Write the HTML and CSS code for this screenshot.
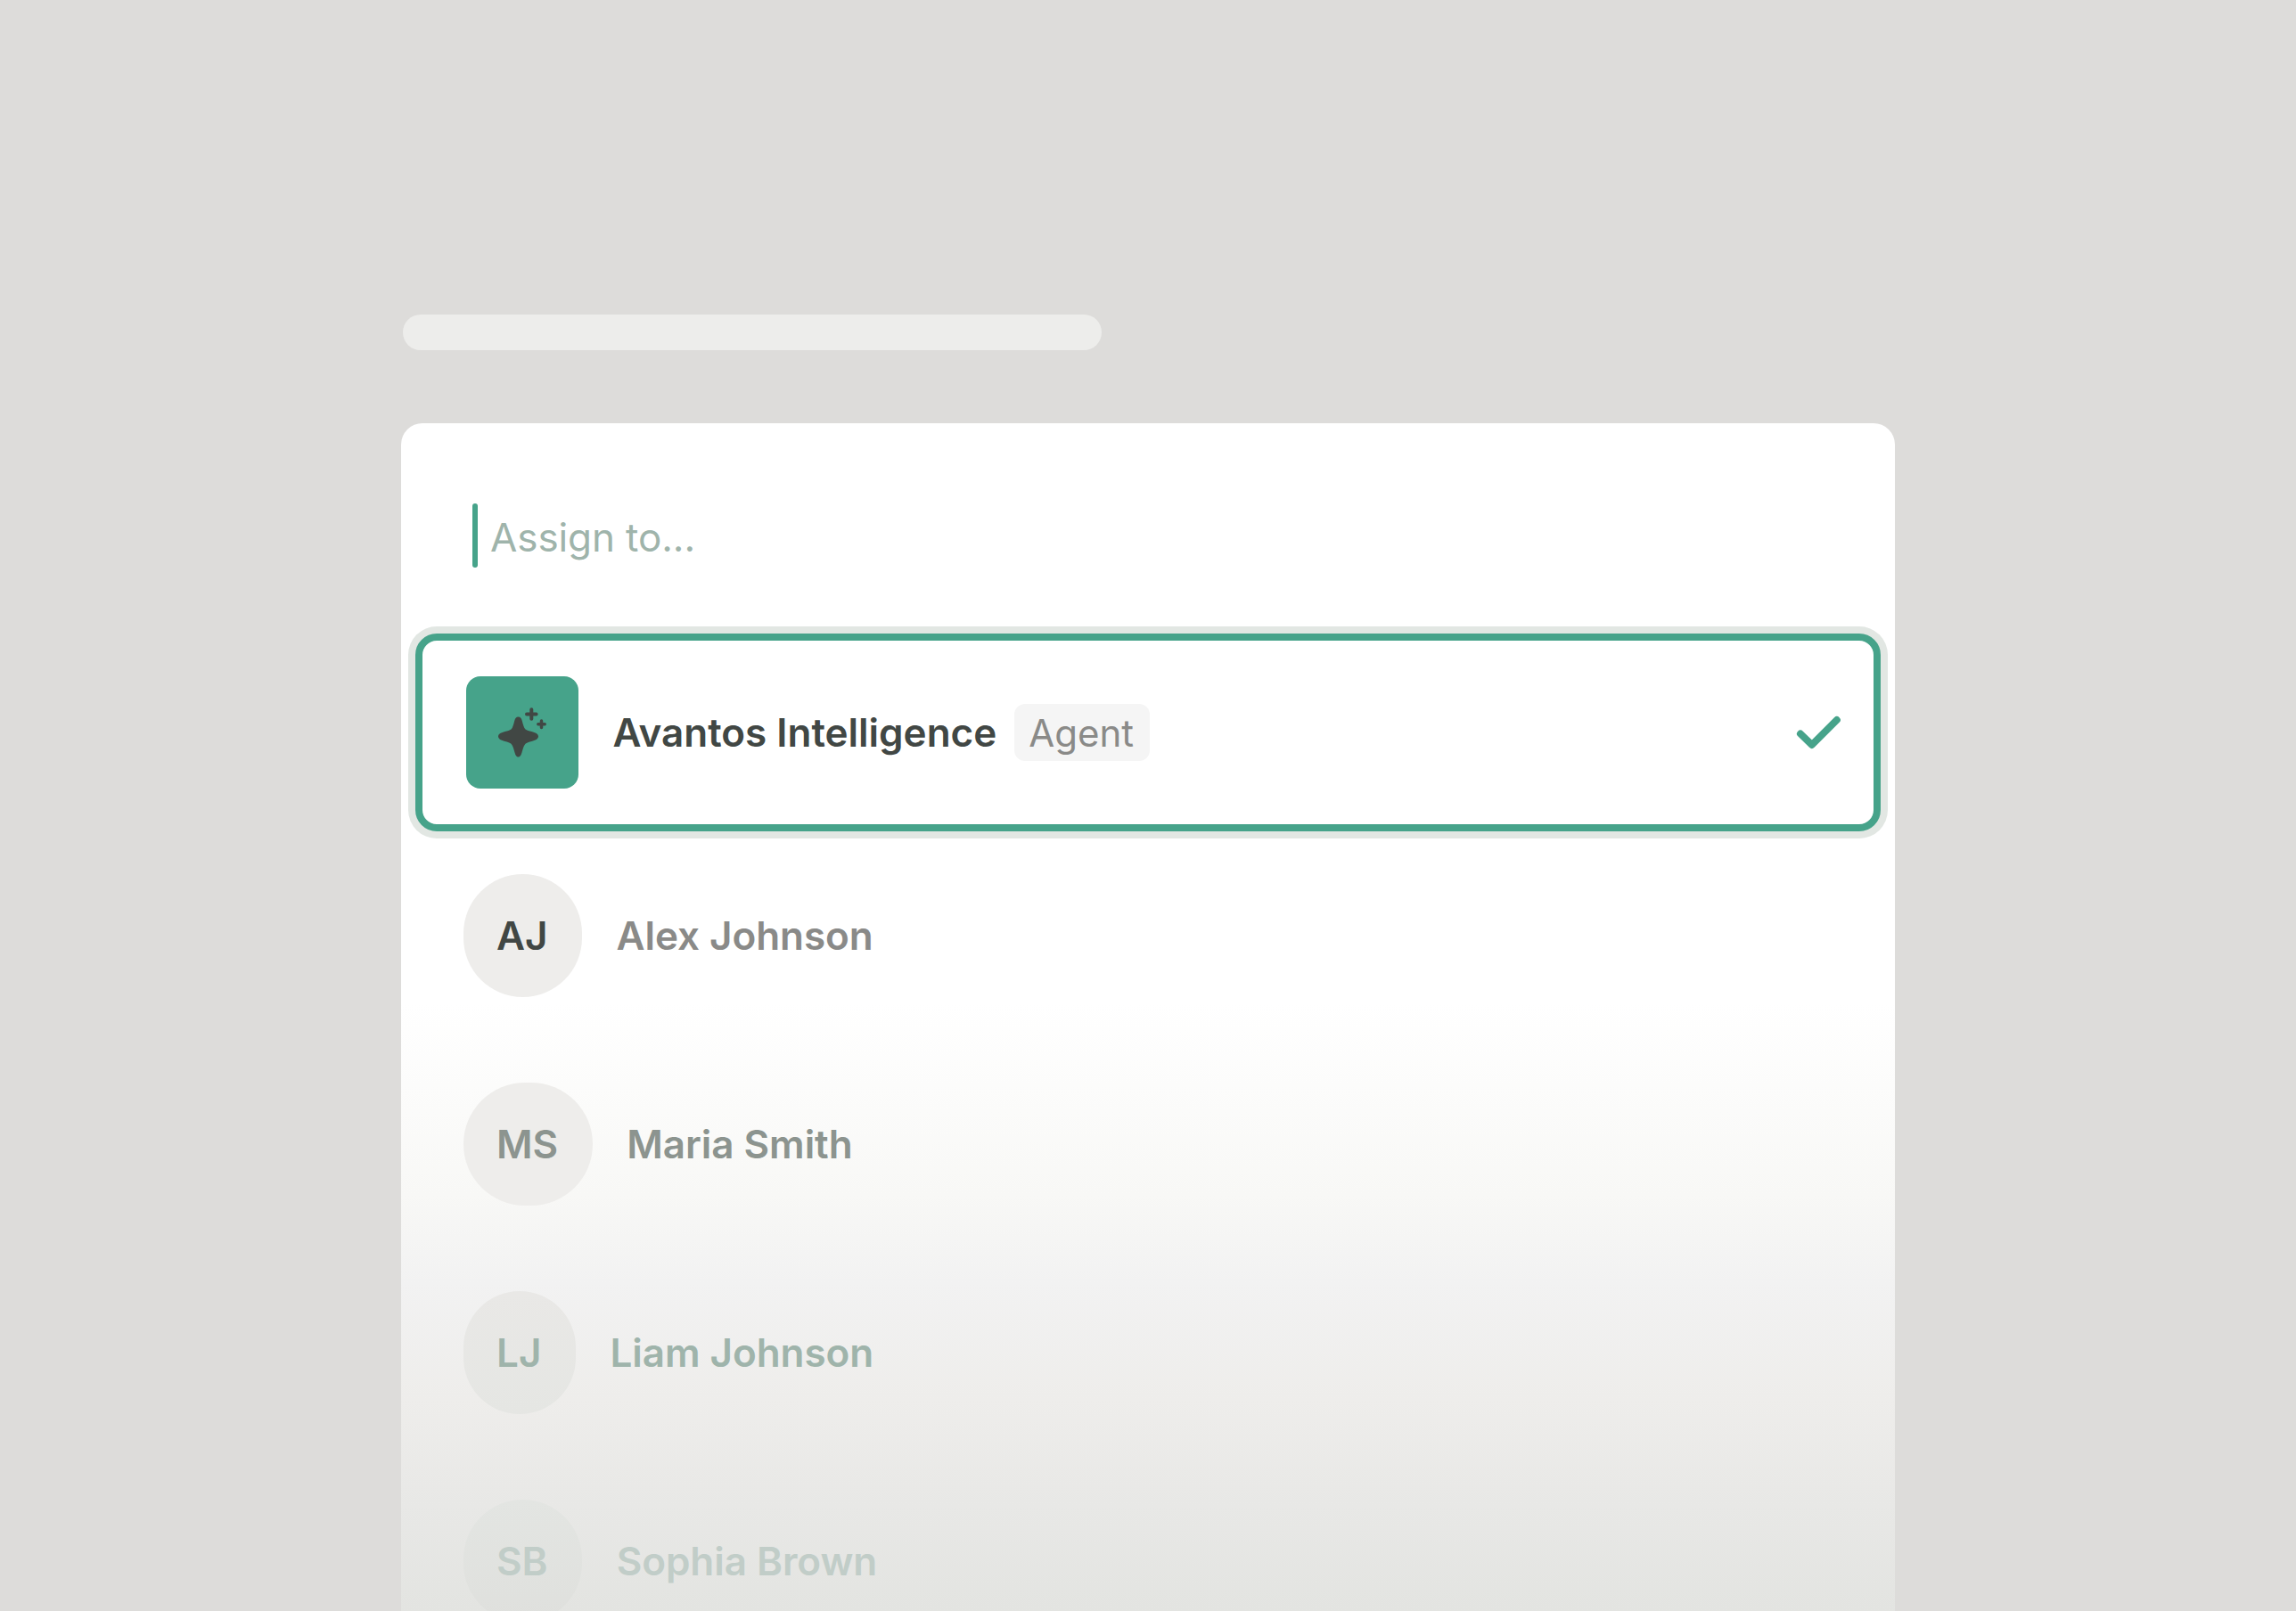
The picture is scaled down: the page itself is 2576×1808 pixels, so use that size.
FILE: index.html
```html
<!doctype html>
<html lang="en">
<head>
    <meta charset="UTF-8" />
    <meta name="viewport" content="width=device-width, initial-scale=1.0" />
    <title>Assign to</title>
    <link rel="stylesheet" href="styles.css">
</head>
<body>
    <div class="page">
        <div class="skeleton"></div>

        <div class="card">
            <div class="search">
                <span class="caret"></span>
                <span class="placeholder">Assign to...</span>
            </div>

            <div class="option selected">
                <div class="agent-icon">
                    <svg width="54" height="56" viewBox="0 0 54 56">
                        <path d="M22.500 10.500c2.400 0 3.500 1.700 4.200 4.200 1.400 5 2 8 3.800 9.700 1.600 1.300 4 1.900 7 2.700 4 1 7.500 2.700 7.500 5.400s-3.500 4.500-7.500 5.500c-3 .8-5.700 1.500-7 2.700-1.500 1.500-2.500 4.500-3.700 8.700-.9 3.400-1.900 6-4.300 6s-3.400-2.600-4.300-6c-1.200-4.200-2.200-7.200-3.700-8.700-1.300-1.200-4-1.900-7-2.700C3.500 37 0 35.200 0 32.500s3.500-4.400 7.500-5.400c3-.8 5.400-1.400 7-2.700 1.800-1.700 2.400-4.700 3.800-9.700.7-2.500 1.800-4.200 4.200-4.200z" />
                        <path class="spark" d="M37.300 2.200v10.600M32 7.500h10.600" />
                        <path class="spark-small" d="M48.500 15v7.400M44.800 18.700h7.400" />
                    </svg>
                </div>
                <span class="name">Avantos Intelligence</span>
                <span class="badge">Agent</span>
                <svg class="check" width="50" height="38" viewBox="0 0 50 38">
                    <path d="M5 20.500 17.800 33 45.800 5" />
                </svg>
            </div>

            <div class="option alex">
                <div class="avatar">AJ</div>
                <span class="name">Alex Johnson</span>
            </div>
            <div class="option maria">
                <div class="avatar">MS</div>
                <span class="name">Maria Smith</span>
            </div>
            <div class="option liam">
                <div class="avatar">LJ</div>
                <span class="name">Liam Johnson</span>
            </div>
            <div class="option sophia">
                <div class="avatar">SB</div>
                <span class="name">Sophia Brown</span>
            </div>
        </div>
    </div>
</body>
</html>
```

FILE: styles.css
```css
* {
    margin: 0;
    padding: 0;
    box-sizing: border-box;
}

body {
    font-family: Inter, sans-serif;
    font-size: 44px;
    background: #dddcda;
    color: #414744;
    height: 100vh;
    overflow: hidden;
}

.page {
    width: 1676px;
    height: 100vh;
    margin: 0 auto;
    padding-top: 353px;
    overflow: hidden;
}

.skeleton {
    width: 784px;
    height: 40px;
    margin: 0 0 82px 2px;
    border-radius: 20px;
    background: #ededeb;
}

.card {
    height: 1400px;
    padding: 0 16px;
    border-radius: 24px 24px 0 0;
    /* fades the list out into the page background */
    background: linear-gradient(180deg, #ffffff 650px, #f8f8f6 865px, #f2f2f2 965px, #eeedeb 1095px, #e8e8e6 1215px, #e3e4e1 1333px);
}

.search {
    display: flex;
    align-items: center;
    gap: 14px;
    height: 236px;
    padding: 20px 64px 0;
}

.caret {
    width: 6px;
    height: 72px;
    margin-bottom: 4px;
    border-radius: 3px;
    background: #46a38a;
}

.placeholder {
    color: #9fb4ab;
    letter-spacing: -0.1px;
}

.option {
    display: flex;
    align-items: center;
    height: 234px;
    padding: 0 54px;
}

.name {
    font-weight: 600;
    line-height: 52px;
    letter-spacing: -0.05px;
}

.selected {
    height: 222px;
    padding: 0 37px 0 49px;
    border: 8px solid #46a38a;
    border-radius: 24px;
    background: #ffffff;
    box-shadow: 0 0 0 8px #e2e7e3;
}

.selected .name {
    letter-spacing: 0;
}

.agent-icon {
    display: flex;
    align-items: center;
    justify-content: center;
    width: 126px;
    height: 126px;
    margin-right: 38.5px;
    border-radius: 16px;
    background: #46a38a;
}

.agent-icon svg {
    fill: #414744;
}

.spark,
.spark-small {
    stroke: #414744;
    stroke-width: 4;
    stroke-linecap: round;
}

.spark-small {
    stroke-width: 3.5;
}

.badge {
    height: 64px;
    margin-left: 19.5px;
    padding: 1px 18.5px 0 16.5px;
    border-radius: 12px;
    background: #f5f5f5;
    color: #8a8a88;
    font-size: 42px;
    line-height: 64px;
}

.check {
    margin-left: auto;
    fill: none;
    stroke: #46a38a;
    stroke-width: 8;
    stroke-linecap: round;
    stroke-linejoin: round;
}

.avatar {
    height: 138px;
    margin-right: 38.5px;
    padding: 0 38.5px 0 37px;
    border-radius: 69px;
    background: #eeedeb;
    font-weight: 600;
    line-height: 138px;
}

.alex .name {
    color: #8a8a88;
}

.maria {
    color: #8c948f;
}

.liam {
    color: #9fb4ab;
}

.liam .avatar {
    background: linear-gradient(#e9e8e6, #e5e6e3);
}

.sophia {
    color: #c1cdc8;
}

.sophia .avatar {
    background: linear-gradient(#e3e5e2, #dfe0dd);
}
```
